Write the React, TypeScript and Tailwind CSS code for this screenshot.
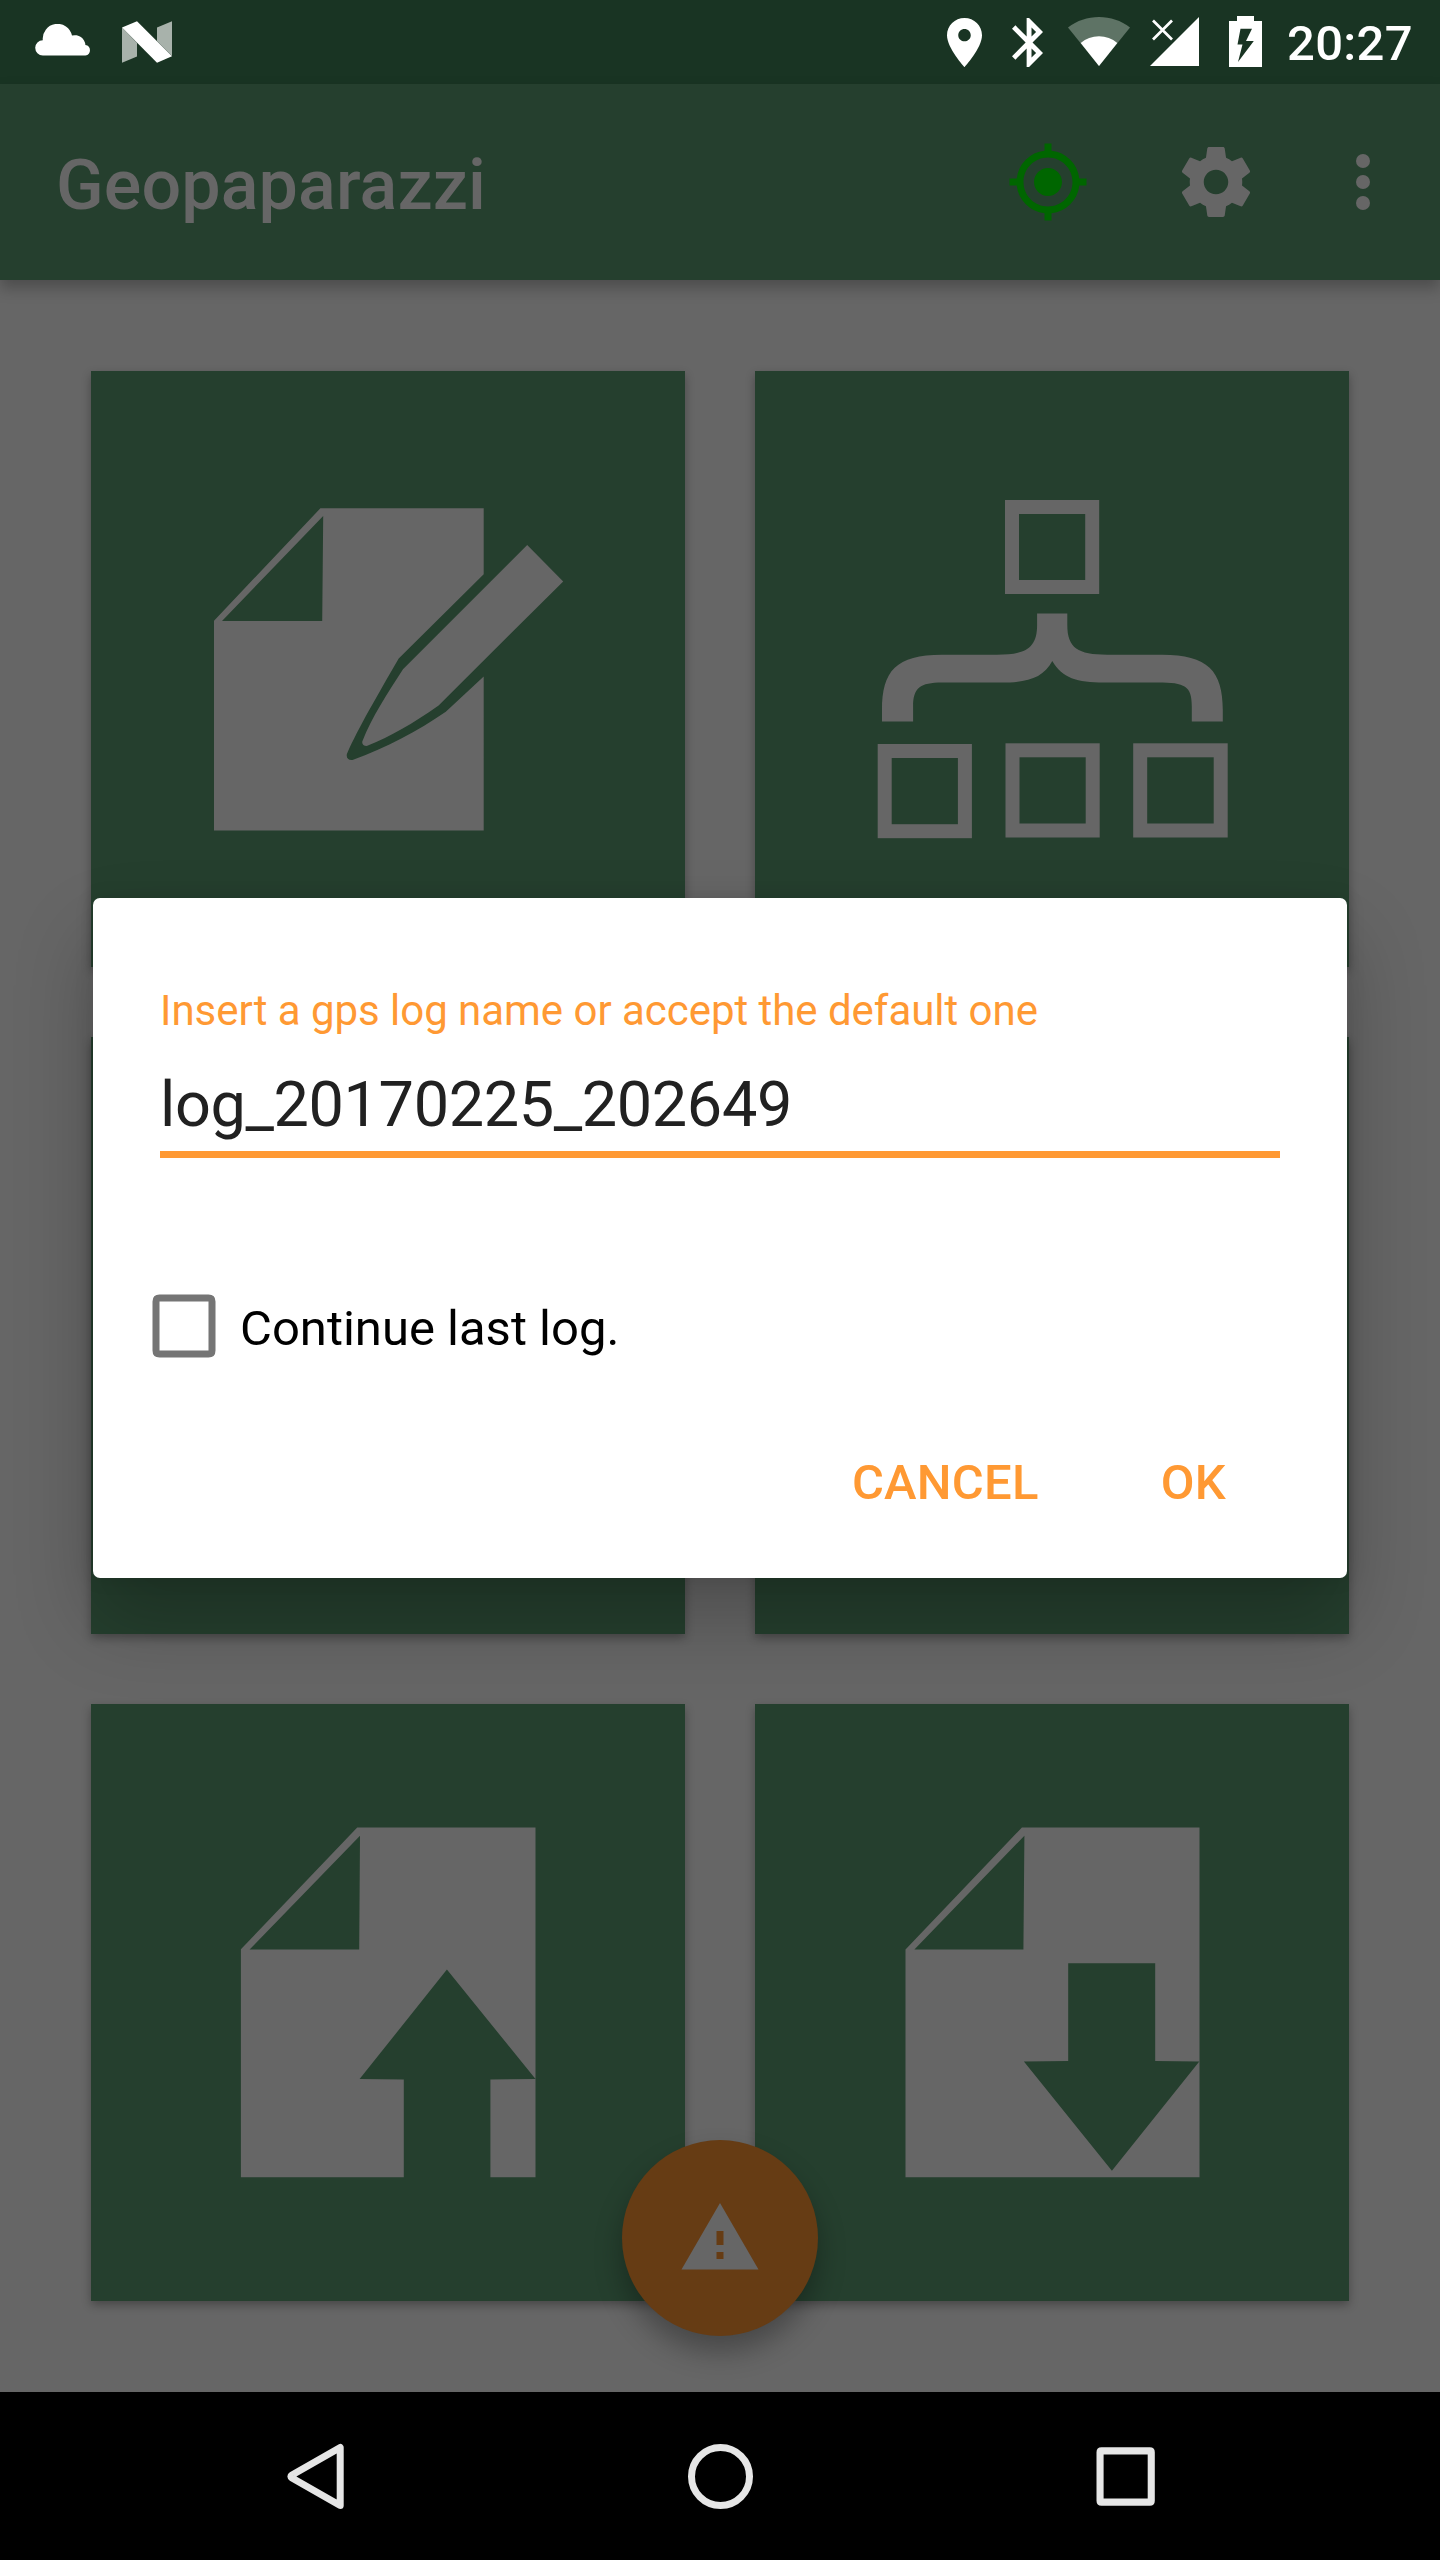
import type { ReactNode } from "react";

const PAPER = "#666666";

function StatusBar() {
  return (
    <header className="flex h-[84px] shrink-0 items-start bg-[#193423] text-white">
      <svg className="mt-[24px] ml-[35px] h-[32px] w-[56px]" viewBox="35 24 56 32" fill="#fff">
        <path d="M42.8 55.4A7.6 7.6 0 0 1 42.8 40.2A14.8 14.8 0 0 1 72 35.6A10.6 10.6 0 0 1 85.4 44.9A5.3 5.3 0 0 1 85.4 55.4Z" />
      </svg>
      <svg className="mt-[21px] ml-[31px] h-[42px] w-[50px]" viewBox="122 21 50 42">
        <path fill="#a8b2ab" d="M122 27.5L137 43V56.5L122 62.7ZM157 27.5L172 21.3V56L157 41Z" />
        <path fill="#fff" d="M122 27.5L137 21.3L172 56.3L157 62.7Z" />
      </svg>
      <svg className="mt-[18px] ml-[775px] h-[49px] w-[35px]" viewBox="5 2 14 20" preserveAspectRatio="none" fill="#fff">
        <path d="M12 2C8.13 2 5 5.13 5 9c0 5.25 7 13 7 13s7-7.75 7-13c0-3.87-3.13-7-7-7zm0 9.5c-1.38 0-2.5-1.12-2.5-2.5s1.12-2.5 2.5-2.5 2.5 1.12 2.5 2.5-1.12 2.5-2.5 2.5z" />
      </svg>
      <svg className="mt-[18px] ml-[30px] h-[49px] w-[31px]" viewBox="5 2 12.71 20" preserveAspectRatio="none" fill="#fff">
        <path d="M17.71 7.71L12 2h-1v7.59L6.41 5 5 6.41 10.59 12 5 17.59 6.41 19 11 14.41V22h1l5.71-5.71-4.3-4.29 4.3-4.29zM13 5.83l1.88 1.88L13 9.59V5.83zm1.88 10.46L13 18.17v-3.76l1.88 1.88z" />
      </svg>
      <svg className="mt-[17px] ml-[25px] h-[49px] w-[62px]" viewBox="1068 17 62 49">
        <path fill="#5e7365" d="M1099 66L1068 27.5C1077 20.5 1087.500 17 1099 17S1121 20.500 1130 27.500Z" />
        <path fill="#fff" d="M1099 66L1080.700 43C1086 38.600 1092 36.300 1099 36.300S1112 38.600 1117.300 43Z" />
      </svg>
      <svg className="mt-[17px] ml-[20px] h-[49px] w-[49px]" viewBox="1150 17 49 49">
        <path fill="#fff" d="M1199 17V66H1150Z" />
        <path stroke="#fff" strokeWidth="2.700" d="M1153 20.500L1172 39.500M1172 20.500L1153 39.500" />
      </svg>
      <svg className="mt-[16px] ml-[30px] h-[51px] w-[33px]" viewBox="1229 16 33 51">
        <path
          fill="#fff"
          fillRule="evenodd"
          d="M1237 16H1254V21H1262V67H1229V21H1237ZM1240.500 28.700L1237.500 44.500H1242.500L1238 62L1253.800 41H1246L1252 28.700Z"
        />
      </svg>
      <span className="mt-[15px] ml-[25px] text-[49px] leading-[58px] font-medium tracking-[0.3px]">20:27</span>
    </header>
  );
}

function Toolbar() {
  return (
    <div className="relative flex h-[196px] shrink-0 items-center bg-[#253f2e] pl-[56px] shadow-[0_8px_14px_rgba(0,0,0,0.25)]">
      <h1 className="mt-[6px] flex-1 text-[70px] leading-[82px] font-medium tracking-[0.13px] text-[#666666]">
        Geopaparazzi
      </h1>
      <svg className="size-[84px]" viewBox="0 0 24 24" fill="#006600">
        <path d="M12 8c-2.210 0-4 1.790-4 4s1.790 4 4 4 4-1.790 4-4-1.790-4-4-4zm8.940 3A8.994 8.994 0 0 0 13 3.060V1h-2v2.060A8.994 8.994 0 0 0 3.060 11H1v2h2.060A8.994 8.994 0 0 0 11 20.940V23h2v-2.060A8.994 8.994 0 0 0 20.940 13H23v-2h-2.060zM12 19c-3.870 0-7-3.130-7-7s3.130-7 7-7 7 3.130 7 7-3.130 7-7 7z" />
      </svg>
      <svg className="ml-[84px] size-[84px]" viewBox="0 0 24 24" fill={PAPER}>
        <path d="M19.430 12.980c.040-.320.070-.640.070-.980s-.030-.660-.070-.980l2.110-1.650c.190-.150.240-.420.120-.640l-2-3.460c-.120-.220-.390-.300-.610-.220l-2.490 1c-.520-.400-1.080-.730-1.690-.980l-.380-2.650C14.460 2.180 14.250 2 14 2h-4c-.250 0-.460.180-.490.420l-.380 2.650c-.610.250-1.170.590-1.690.980l-2.490-1c-.230-.090-.490 0-.610.220l-2 3.460c-.130.220-.070.490.120.640l2.110 1.650c-.040.320-.070.650-.070.980s.030.660.070.980l-2.110 1.650c-.190.150-.240.420-.120.640l2 3.460c.120.220.390.300.610.220l2.490-1c.520.400 1.080.730 1.690.980l.380 2.650c.030.240.240.420.490.420h4c.250 0 .460-.180.490-.420l.380-2.650c.610-.250 1.170-.590 1.690-.980l2.490 1c.230.090.490 0 .610-.220l2-3.460c.120-.220.070-.490-.120-.640l-2.110-1.650zM12 15.500c-1.930 0-3.500-1.570-3.500-3.500s1.570-3.500 3.500-3.500 3.500 1.570 3.500 3.500-1.570 3.500-3.500 3.500z" />
      </svg>
      <svg className="mr-[35px] ml-[63px] size-[84px]" viewBox="0 0 24 24" fill={PAPER}>
        <circle cx="12" cy="6" r="2" />
        <circle cx="12" cy="12" r="2" />
        <circle cx="12" cy="18" r="2" />
      </svg>
    </div>
  );
}

function Tile({ children }: { children?: ReactNode }) {
  return <button className="bg-[#253f2e] shadow-[0_4px_9px_rgba(0,0,0,0.3)]">{children}</button>;
}

function NotesIcon() {
  return (
    <svg className="block size-full" viewBox="91 371 594 596">
      <path
        fill={PAPER}
        fillRule="evenodd"
        d="M320.400 508.300H483.700V574.300L398.700 658.600C376 698 359 727 346.900 753.900C346 758 348.500 760.500 352.500 760C386 748 418 731 445.800 711.800L483.700 676.400V830.400H214V620.700ZM323.200 516L222 621H322.200Z"
      />
      <path
        fill={PAPER}
        d="M527.200 545L563.200 581.400L438.600 705.400C412 724 391 736 366.700 746C363.500 746 361.800 744 362.300 741.400C372 717 387 694 403 669.300Z"
      />
    </svg>
  );
}

function MetadataIcon() {
  return (
    <svg className="block size-full" viewBox="755 371 594 596">
      <g fill="none" stroke={PAPER} strokeWidth="14">
        <rect x="1012" y="507" width="80.200" height="80" />
        <rect x="884.700" y="751" width="80.200" height="80.200" />
        <rect x="1012.500" y="750.300" width="80.200" height="80.200" />
        <rect x="1140.200" y="750.300" width="80.500" height="80.200" />
      </g>
      <path
        fill={PAPER}
        d="M1037.100 613.600H1067.300V625C1067.300 648 1078 654.700 1107 654.700H1162C1208 654.700 1222.800 671 1222.800 710V721.400H1191.800V706.400C1191.800 686 1185 682.500 1158 682.500H1104C1077 682.500 1062 678 1052.300 661C1043 678 1028 682.500 1001 682.500H942C920 682.500 913.100 688 913.100 706.400V721.400H882V710C882 671 896 654.700 942 654.700H997C1026 654.700 1037.100 648 1037.100 625Z"
      />
    </svg>
  );
}

function ExportIcon() {
  return (
    <svg className="block size-full" viewBox="91 1704 594 597">
      <path
        fill={PAPER}
        fillRule="evenodd"
        d="M357.200 1827.500H535.500V2079L446.900 1969.600L359.600 2079L403.800 2079.600V2177.300H240.900V1949.300ZM360 1835.700L249.600 1949.600H359.200ZM490.400 2079.600L535.500 2079V2177.300H490.400Z"
      />
    </svg>
  );
}

function ImportIcon() {
  return (
    <svg className="block size-full" viewBox="755 1704 594 597">
      <path
        fill={PAPER}
        fillRule="evenodd"
        d="M1021.900 1827.500H1199.500V2177.300H905.500V1949.400ZM1024.400 1835.700L914.400 1949.600H1023.400ZM1068.200 1963.200V2061L1023.900 2061.600L1111.900 2170.700L1199.300 2061.600L1155.200 2061V1963.200Z"
      />
    </svg>
  );
}

function LogDialog() {
  return (
    <div className="absolute top-[898px] left-[93px] flex h-[680px] w-[1254px] flex-col rounded-[7px] bg-white px-[67px] pt-[88px] shadow-[0_42px_80px_rgba(0,0,0,0.24),0_0_20px_rgba(0,0,0,0.1)]">
      <label className="text-[42px] leading-[50px] tracking-[-0.035px] whitespace-nowrap text-[#ff9933]">
        Insert a gps log name or accept the default one
      </label>
      <div className="mt-[32px] h-[90px] border-b-[7px] border-[#ff9933] text-[63px] leading-[74px] tracking-[-0.38px] text-[#212121]">
        log_20170225_202649
      </div>
      <div className="mt-[136px] -ml-[8px] flex h-[64px] items-center">
        <svg className="size-[64px]" viewBox="0 0 64 64" fill="#757575">
          <path
            fillRule="evenodd"
            d="M7.500 0.500H56.500Q63.500 0.500 63.500 7.500V56.500Q63.500 63.500 56.500 63.500H7.500Q0.500 63.500 0.500 56.500V7.500Q0.500 0.500 7.500 0.500ZM7.500 7.500V56.500H56.500V7.500Z"
          />
        </svg>
        <span className="mt-[6px] ml-[24px] text-[49px] leading-[58px] text-black">Continue last log.</span>
      </div>
      <div className="mt-[96px] flex justify-end gap-[122px] pr-[54px] text-[49px] leading-[58px] font-medium tracking-[0.25px] text-[#ff9933]">
        <button>CANCEL</button>
        <button>OK</button>
      </div>
    </div>
  );
}

function NavBar() {
  return (
    <nav className="flex h-[168px] shrink-0 items-center justify-center gap-[321px] bg-black">
      <svg className="size-[84px]" viewBox="273 2434 84 84" fill="none" stroke="#e6e6e6" strokeWidth="7" strokeLinejoin="round">
        <path d="M340.200 2447.500V2505.500L292 2478Q289.700 2476.500 292 2475Z" />
      </svg>
      <svg className="size-[84px]" viewBox="0 0 84 84" fill="none" stroke="#e6e6e6" strokeWidth="7">
        <circle cx="42.500" cy="42.500" r="29" />
      </svg>
      <svg className="size-[84px]" viewBox="0 0 84 84" fill="#e6e6e6">
        <path
          fillRule="evenodd"
          d="M18.500 13.300H66.800Q71.800 13.300 71.800 18.300V66.700Q71.800 71.700 66.800 71.700H18.500Q13.500 71.700 13.500 66.700V18.300Q13.500 13.300 18.500 13.300ZM20.600 20.400V64.600H64.700V20.400Z"
        />
      </svg>
    </nav>
  );
}

export default function App() {
  return (
    <div className="relative flex h-[2560px] w-[1440px] flex-col overflow-hidden bg-[#666666] font-[Roboto,sans-serif]">
      <StatusBar />
      <Toolbar />
      <main className="grid flex-1 grid-cols-[594px_594px] grid-rows-[596px_597px_597px] gap-[70px] pt-[91px] pl-[91px]">
        <Tile>
          <NotesIcon />
        </Tile>
        <Tile>
          <MetadataIcon />
        </Tile>
        <Tile />
        <Tile />
        <Tile>
          <ExportIcon />
        </Tile>
        <Tile>
          <ImportIcon />
        </Tile>
      </main>
      <button className="absolute top-[2140px] left-[622px] flex size-[196px] items-center justify-center rounded-full bg-[#663c14] shadow-[0_16px_28px_rgba(0,0,0,0.3)]">
        <svg className="size-[84px]" viewBox="0 0 24 24" fill={PAPER}>
          <path d="M1 21h22L12 2 1 21zm12-3h-2v-2h2v2zm0-4h-2v-4h2v4z" />
        </svg>
      </button>
      <LogDialog />
      <NavBar />
    </div>
  );
}
